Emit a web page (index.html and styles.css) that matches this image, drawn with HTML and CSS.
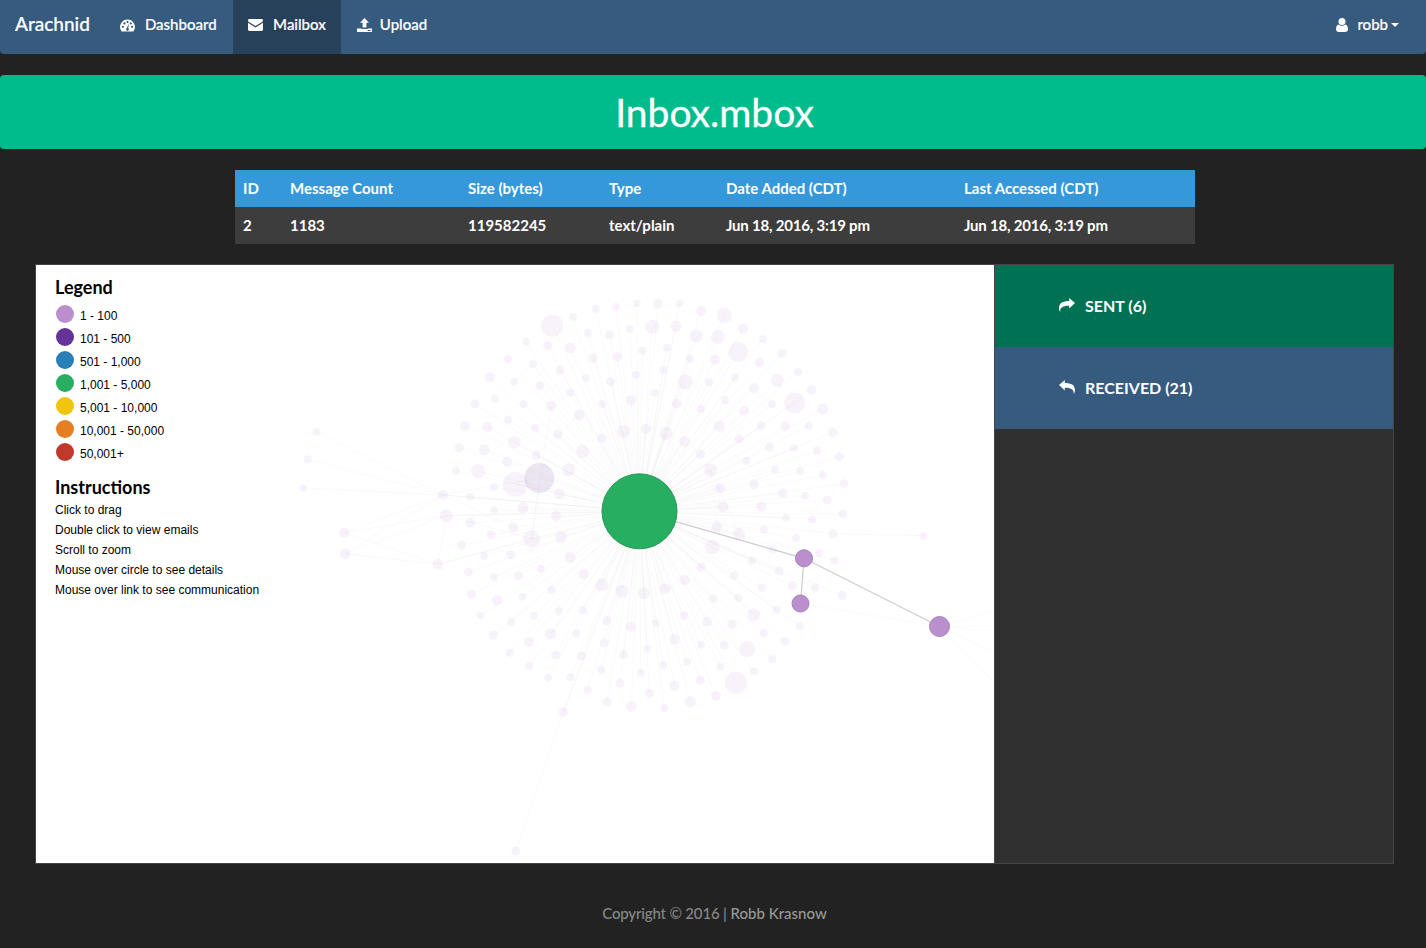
FILE: index.html
```html
<!DOCTYPE html>
<html lang="en">
<head>
<meta charset="utf-8">
<title>Arachnid</title>
<link rel="stylesheet" href="styles.css">
</head>
<body>
<nav class="navbar">
  <a class="brand">Arachnid</a>
  <a class="nav-item dash">
    <svg class="icon" width="15" height="14" viewBox="0 0 15 14"><path d="M7.5 1.5A7.5 7.5 0 0 0 1.6 13.5h11.8A7.5 7.5 0 0 0 7.5 1.5z"/><g class="cut"><circle cx="2.9" cy="8.8" r="1.1"/><circle cx="4.4" cy="5.4" r="1.1"/><circle cx="7.5" cy="4" r="1.1"/><circle cx="12.1" cy="8.8" r="1.1"/><circle cx="10.8" cy="5.4" r="1.1"/><path d="M8.9 5.6l-.6 4.6a1.4 1.4 0 1 1-1.6 0z"/></g></svg>
    Dashboard
  </a>
  <a class="nav-item active">
    <svg class="icon" width="15" height="12" viewBox="0 0 15 12"><path d="M0 1.4A1.4 1.4 0 0 1 1.4 0h12.2A1.4 1.4 0 0 1 15 1.4c0 .6-.4 1.1-.9 1.5L7.5 7 .9 2.9C.4 2.500 0 2 0 1.4z"/><path d="M0 3.7v6.9A1.4 1.4 0 0 0 1.4 12h12.2a1.4 1.4 0 0 0 1.4-1.4V3.7L7.5 8.4z"/></svg>
    Mailbox
  </a>
  <a class="nav-item upload">
    <svg class="icon" width="15" height="14" viewBox="0 0 15 14"><path d="M7.5 0L12 4.8H9.4V9.600H5.6V4.8H3z"/><path d="M0 10.4h4.4v.6h6.2v-.6H15V14H0z"/><rect class="cut" x="10.6" y="12" width="3" height="1"/></svg>
    Upload
  </a>
  <a class="nav-item user">
    <svg class="icon" width="12" height="14" viewBox="0 0 12 14"><circle cx="6" cy="3.6" r="3.5"/><path d="M2.6 6.4C3.5 7.3 4.7 7.8 6 7.8s2.500-.5 3.400-1.400C11 6.800 12 8.500 12 11c0 1.900-1.200 3-2.800 3H2.800C1.200 14 0 12.900 0 11c0-2.500 1-4.200 2.600-4.600z"/></svg>
    <span class="user-name">robb</span><span class="caret"></span>
  </a>
</nav>

<header class="banner"><h1>Inbox.mbox</h1></header>

<table class="info">
  <thead>
    <tr><th>ID</th><th>Message Count</th><th>Size (bytes)</th><th>Type</th><th>Date Added (CDT)</th><th>Last Accessed (CDT)</th></tr>
  </thead>
  <tbody>
    <tr><td>2</td><td>1183</td><td>119582245</td><td>text/plain</td><td class="date">Jun 18, 2016, 3:19 pm</td><td class="date">Jun 18, 2016, 3:19 pm</td></tr>
  </tbody>
</table>

<main class="workspace">
  <section class="graph">
    <svg id="graph-svg" class="graph-svg" viewBox="36 265 958 598" width="958" height="598"></svg>
    <div class="key">
      <h2>Legend</h2>
      <ul class="legend">
        <li><span class="dot c1"></span>1 - 100</li>
        <li><span class="dot c2"></span>101 - 500</li>
        <li><span class="dot c3"></span>501 - 1,000</li>
        <li><span class="dot c4"></span>1,001 - 5,000</li>
        <li><span class="dot c5"></span>5,001 - 10,000</li>
        <li><span class="dot c6"></span>10,001 - 50,000</li>
        <li><span class="dot c7"></span>50,001+</li>
      </ul>
      <h2 class="second">Instructions</h2>
      <ul class="instructions">
        <li>Click to drag</li>
        <li>Double click to view emails</li>
        <li>Scroll to zoom</li>
        <li>Mouse over circle to see details</li>
        <li>Mouse over link to see communication</li>
      </ul>
    </div>
  </section>
  <aside class="side">
    <a class="side-row sent">
      <svg class="side-icon" width="16" height="14" viewBox="0 0 16 14"><path d="M16 5L10.200 0v2.900C4 2.900 0 4.800 0 10.200c0 1.500.5 2.800 1.200 3.800-.3-3.800 1.700-6.200 9-6.200v2.600z"/></svg>
      SENT (6)
    </a>
    <a class="side-row received">
      <svg class="side-icon" width="16" height="14" viewBox="0 0 16 14"><path d="M0 5l5.800-5v2.900C12 2.900 16 4.800 16 10.200c0 1.500-.5 2.800-1.200 3.800.3-3.800-1.700-6.200-9-6.200v2.600z"/></svg>
      RECEIVED (21)
    </a>
  </aside>
</main>

<footer class="footer"><span class="footer-copy">Copyright © 2016 |</span> <a class="footer-link">Robb Krasnow</a></footer>
<script src="graph.js"></script>
</body>
</html>
```
FILE: styles.css
```css
* { box-sizing: border-box; }
html, body { margin: 0; padding: 0; }
body {
  background: #222;
  color: #fff;
  font-family: Lato, "Liberation Sans", sans-serif;
  font-size: 15px;
  line-height: 21px;
}
.navbar {
  display: flex;
  align-items: stretch;
  height: 54px;
  margin-bottom: 21px;
  background: #375a7f;
  border-radius: 0 0 4px 4px;
}
.brand {
  display: flex;
  align-items: center;
  padding: 0 15px 8px;
  font-size: 19px;
  font-weight: 500;
  -webkit-text-stroke: .2px #fff;
}
.nav-item {
  display: flex;
  align-items: center;
  padding: 0 15.5px 6px;
  font-weight: 500;
  -webkit-text-stroke: .2px #fff;
}
.nav-item.active { background: #28415b; }
.nav-item.user { margin-left: auto; padding-right: 27px; }
.icon { margin: 2px 10px 0 0; fill: #fff; flex: none; }
.icon .cut, .icon rect.cut { fill: #375a7f; }
.dash .icon { margin-right: 9.500px; }
.dash { padding-right: 16px; }
.upload .icon { margin-right: 8px; }
.user .icon { margin-right: 9px; }
.caret {
  width: 0;
  height: 0;
  margin-left: 3px;
  margin-top: 2px;
  border-top: 4px solid #fff;
  border-left: 4px solid transparent;
  border-right: 4px solid transparent;
}
.banner {
  height: 74px;
  margin-bottom: 21px;
  padding-left: 3px;
  background: #00bc8c;
  border-radius: 4px;
  display: flex;
  align-items: center;
  justify-content: center;
}
.banner h1 {
  margin: 0;
  font-size: 39px;
  font-weight: 400;
  line-height: 43px;
  -webkit-text-stroke: .3px #fff;
}
.info {
  width: 960px;
  margin: 0 0 20px 235px;
  border-collapse: collapse;
  table-layout: fixed;
  font-weight: 700;
}
.info th, .info td { padding: 8px; height: 37px; text-align: left; font-weight: 700; }
.info .date { letter-spacing: -.2px; }
.info thead tr { background: #3498db; }
.info tbody tr { background: #3d3d3d; }
.info th:nth-child(1) { width: 47px; }
.info th:nth-child(2) { width: 178px; }
.info th:nth-child(3) { width: 141px; }
.info th:nth-child(4) { width: 117px; }
.info th:nth-child(5) { width: 238px; }
.info th:nth-child(6) { width: 239px; }
.workspace {
  display: flex;
  width: 1359px;
  height: 600px;
  margin-left: 35px;
  border: 1px solid #444;
}
.graph {
  position: relative;
  width: 958px;
  height: 598px;
  background: #fff;
  overflow: hidden;
  flex: none;
}
.graph-svg { display: block; }
.key {
  position: absolute;
  left: 19px;
  top: 12px;
  color: #000;
  font-family: "Liberation Sans", Arial, sans-serif;
  font-size: 12px;
}
.key h2 {
  margin: 0 0 5px;
  font-family: Lato, sans-serif;
  font-size: 18px;
  line-height: 21px;
  font-weight: 700;
}
.key h2.second { margin: 13px 0 2px; }
.legend, .instructions { list-style: none; margin: 0; padding: 0; }
.legend li { display: flex; align-items: center; height: 23px; padding-top: 4px; }
.dot { width: 18px; height: 18px; border-radius: 50%; margin: 0 6px 6px 1px; }
.c1 { background: #bb8fce; }
.c2 { background: #663399; }
.c3 { background: #2980b9; }
.c4 { background: #27ae60; }
.c5 { background: #f1c40f; }
.c6 { background: #e67e22; }
.c7 { background: #c0392b; }
.instructions li { height: 20px; line-height: 20px; }
.side { flex: 1; background: #303030; border-left: 1px solid #444; }
.side-row {
  display: flex;
  align-items: center;
  height: 82px;
  padding: 0 0 2px 64px;
  font-size: 16px;
  font-weight: 700;
}
.side-icon { fill: #fff; margin-right: 10px; flex: none; }
.sent { background: #007153; }
.received { background: #375a7f; }
.footer {
  margin-top: 39px;
  padding-left: 3px;
  text-align: center;
  color: #888;
  font-weight: 500;
}
.footer-copy { letter-spacing: -.17px; }
.footer-link { color: #999; }
/* graph */
.spoke { stroke: #777; stroke-opacity: .05; stroke-width: .8; fill: none; }
.hot { stroke: #ccc; stroke-width: 1.2; fill: none; }
.faded { fill: #bb8fce; fill-opacity: .11; }
.faded.heavy { fill: #663399; fill-opacity: .12; }
.live { fill: #bb8fce; stroke: #a682b8; stroke-width: 1; }
.hub { fill: #27ae60; stroke: #219a54; stroke-width: 1; }
```
FILE: graph.js
```js
var HUB = [639.5, 511.3];
var NODES = [
[552.3,325.7,11],[573,317,4],[595.7,309,4],[616,307,4],[636.7,303.3,4],[526,341.7,4],[547.7,345.7,4.5],[570.3,348,5.5],[587.7,333,4],[609.3,334.7,4.5],[629.7,329,4],[652.3,326.7,7],
[508,359,4],[533,364,4],[593,358.3,4.5],[617.3,356.7,4.7],[642.3,350.7,4],[489.7,377.3,5],[514,381.7,4],[560,370,4.5],[540,385.7,4.5],[586,378,4],[610.7,381.7,4.5],[636,374.7,4],
[474.7,403.7,4.5],[495,398.7,4],[523.7,404,4],[551,406,5],[570,392.7,4],[602.3,404,4],[631,400.3,5],[465,425.7,5],[487.3,427.3,5],[508,419.7,4],[535,427.7,4],[558,434.3,4.5],[579,414.7,5.5],[601.7,438.3,4.5],[623.3,431.3,6.5],[645.7,429,5],
[459.3,447.7,4.5],[484.3,449.7,5.5],[514.3,442,6.5],[536.3,455.3,4.5],[582.7,451.3,6.5],[507,461.7,5],[568.7,469.700,6.5],[456,471,4],[478,471,7],[515.3,484.3,12.5],[494,487,4],[559.3,493.7,5.5],[443,495,5],[470.3,496.7,4],[494,510,4],[523,507.7,5.5],[446.3,515.7,6.5],[556,516,5],[470,522.7,5],[513,527.3,5],[491,534.7,4.5],[531.7,538.7,8.7],[561,537.3,6],[461.7,545,4.5],[484,555.7,4],[510.3,554.7,4.5],[570.3,557.3,5.5],[468.3,572.3,4.5],[494,577.3,4],[518.3,575.7,4.5],[541,568.7,4],[583.7,574.3,5],[438,564.3,5.5],
[658,303.7,5],[679.7,303.7,4],[701,311.3,5],[724.3,315.3,7.500],[676,326.3,5.7],[696.3,336,6.5],[718,337,7],[743.3,328.7,5],[763,339,4],[667,347.7,4],[689.7,358.7,4],[714.7,360,5],[738.3,352,10],[759.3,362.3,4.5],[782,353.3,4.5],[798,372,4],[663.3,370,4],[685.3,382,7.5],[709,382,4],[735,377,4],[754,388,5],[777.3,380.3,6.5],[811.7,389.7,4.7],[655,393,4],[676.7,403.7,5],[701,409,4],[725,400,4],[744,410.7,5],[772,404.3,4],[794.7,403,10.500],[822.7,409,5.5],[666,433.3,6.5],[684.7,441.3,5.5],[719.3,426,5.7],[761,425.7,4.5],[785.3,426.3,4.7],[808.7,425.7,4],[832.7,432.3,4.7],[739,438.7,4.5],[700.3,454,4.7],[769.3,447.3,4.7],[794,448,4],[817,451,4],[839.3,456.7,4.7],[710.7,469.7,6.5],[746.3,460.700,4],[775,469.7,4],[800,471.3,4],[823,475,4],[844,483.7,4.5],[720,488,5],[754.3,484.3,4.7],[782.7,493.3,4.7],[805,495.7,4],[827.3,500,4.5],[722.7,506.7,5.5],[761.3,506.7,5],[786,517.7,4],[812.3,519.3,4],[842.7,514,4.5],[717,526.7,5.3],[739,534,6],[764,529.7,4],[796.3,538,4],[833,533.7,4.5],[712.3,547,7.3],[773,549.7,4],[752,560.7,4],[779,571,4.5],[819.3,553,4],[834.7,560.3,4],[701,567.3,4.7],[734.3,575.7,4],[684.7,580,5.3],
[762,587.7,4],[792.3,585.7,4.7],[815,587.7,4],[842.3,595.3,4.5],[776.7,609.7,4],[753.7,614.7,6.500],[799.7,626,4],[763.7,633.3,4],[784.7,641,4.5],[747.3,649,8],[772.3,659,4],[753.7,671.3,4],[736,682.7,11],
[601.7,585,6.5],[622,591.3,6.5],[643.7,593.3,6],[665.3,588.700,5.5],[471.3,594.3,4.5],[497,600,5.3],[522.3,596.7,4],[551.7,590.3,4],[480.3,615.7,4],[511.3,622.3,4],[534,615.7,4],[559,611.3,4],[582.7,610,4],[606.7,620.7,4.5],[631,627.3,5],[656,623.3,4],[684,615.7,4],[713.3,598.7,4],[738.3,597.7,4],[732.3,624,4.5],[707,621.7,5],[493.3,635.3,4.5],[529,642,5],[550.7,633.7,5.7],[576.7,633.3,4],[604.3,642.7,4.5],[674.3,639.3,5.5],[701,644.7,4],[724.3,645.3,4.5],[509.7,652.7,4],[555.7,655,4.5],[581.7,656,4.5],[623.7,655,4.5],[647.3,648.7,4],[687,661.7,4],[663.3,665,4],[720.3,666.7,4],[529.3,666,4],[548.3,677.7,4],[570.3,677.3,4],[601.3,669.7,4],[640.7,672.7,4],[700.3,680.3,4.5],[587.7,689.7,4],[620,683.3,4.5],[674.3,685.7,5],[649.3,693.3,4.5],[716,695.7,5],[563.3,712,4.7],[607,701.7,4.5],[631.3,706.3,5.5],[664,708,4],[690.3,702,5.7]
];
var HEAVY = [539.3, 478, 15];
var OUTER = [[344.3,532.7,5],[345.3,553.7,5.5],[316.7,432,4],[307.7,459.3,4],[303.3,488,4],[923.3,535.7,4],[515.7,851,4.5]];
var EXTRA = [
[443,495,316.7,432],[443,495,307.7,459.3],[443,495,303.3,488],[443,495,344.3,532.7],[446.3,515.7,345.3,553.7],[345.3,553.7,443,495],
[344.3,532.7,438,564.3],[345.3,553.7,438,564.3],[446.3,515.7,344.3,532.7],[446.3,515.7,438,564.3],[438,564.3,531.7,538.7],[446.3,515.7,531.7,538.7],
[443,495,539.3,478],[443,495,513,527.3],[539.3,478,531.7,538.7],[551,406,531.7,538.7],[579,414.7,536.3,455.3],[514,381.7,533,364],[710.7,469.7,717,526.7],[710.7,469.7,739,534],
[833,533.7,923.3,535.700],[800.5,603.5,939.5,626.5],[515.700,851,563.3,712],[563.3,712,639.5,511],[539.3,478,639.5,511],[443,495,639.5,511],[446.3,515.7,639.5,511],
[939.5,626.5,994,610],[939.5,626.500,994,626],[939.5,626.5,994,631],[939.5,626.5,994,652],[939.5,626.5,994,682]
];
var svg = document.getElementById('graph-svg');
var NS = 'http://www.w3.org/2000/svg';
function add(tag, cls, attrs) {
  var el = document.createElementNS(NS, tag);
  el.setAttribute('class', cls);
  for (var k in attrs) el.setAttribute(k, attrs[k]);
  svg.appendChild(el);
}
function line(cls, a, b, c, d) { add('line', cls, {x1: a, y1: b, x2: c, y2: d}); }
function circle(cls, n) { add('circle', cls, {cx: n[0], cy: n[1], r: n[2]}); }
NODES.forEach(function (n) { line('spoke', HUB[0], HUB[1], n[0], n[1]); });
EXTRA.forEach(function (e) { line('spoke', e[0], e[1], e[2], e[3]); });
line('hot', HUB[0], HUB[1], 804, 558.3);
line('hot', 804, 558.3, 800.5, 603.5);
line('hot', 804, 558.3, 939.5, 626.5);
NODES.concat(OUTER).forEach(function (n) { circle('faded', n); });
circle('faded heavy', HEAVY);
circle('hub', [HUB[0], HUB[1], 37.5]);
circle('live', [804, 558.3, 8.5]);
circle('live', [800.5, 603.5, 8.5]);
circle('live', [939.5, 626.5, 10]);
```
